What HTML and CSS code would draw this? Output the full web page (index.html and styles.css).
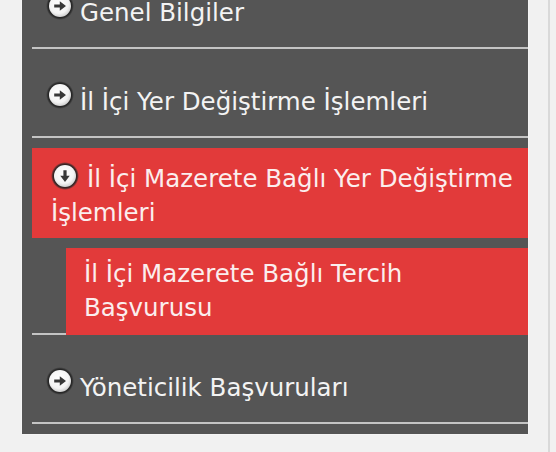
FILE: index.html
```html
<!DOCTYPE html>
<html lang="tr">
<head>
<meta charset="utf-8">
<title>Menü</title>
<link rel="stylesheet" href="styles.css">
</head>
<body>
<svg class="defs" width="0" height="0" aria-hidden="true">
  <defs>
    <radialGradient id="ring" cx="50%" cy="50%" r="50%">
      <stop offset="0.74" stop-color="#151515" stop-opacity="1"/>
      <stop offset="0.88" stop-color="#262626" stop-opacity="0.8"/>
      <stop offset="1" stop-color="#333" stop-opacity="0"/>
    </radialGradient>
    <radialGradient id="face" cx="45%" cy="40%" r="62%">
      <stop offset="0" stop-color="#ffffff"/>
      <stop offset="0.7" stop-color="#f4f4f4"/>
      <stop offset="1" stop-color="#cccccc"/>
    </radialGradient>
    <symbol id="arrow-right" viewBox="0 0 28 28">
      <circle cx="14" cy="14" r="14" fill="url(#ring)"/>
      <circle cx="14" cy="14" r="11" fill="url(#face)"/>
      <path d="M8.2 12.4h5.6V9.3l6.2 4.7-6.2 4.7v-3.1H8.2z" fill="#383838"/>
    </symbol>
    <symbol id="arrow-down" viewBox="0 0 28 28">
      <circle cx="14" cy="14" r="14" fill="url(#ring)"/>
      <circle cx="14" cy="14" r="11" fill="url(#face)"/>
      <path d="M12.4 8.2v5.6H9.3l4.7 6.2 4.7-6.2h-3.1V8.2z" fill="#383838"/>
    </symbol>
  </defs>
</svg>
<div class="page">
  <nav class="panel">
    <ul class="menu">
      <li class="item">
        <a class="link" href="#"><svg class="icon"><use href="#arrow-right"/></svg>Genel Bilgiler</a>
      </li>
      <li class="item">
        <a class="link" href="#"><svg class="icon"><use href="#arrow-right"/></svg>İl İçi Yer Değiştirme İşlemleri</a>
      </li>
      <li class="item item-open">
        <a class="link link-active" href="#"><svg class="icon icon-open"><use href="#arrow-down"/></svg>İl İçi Mazerete Bağlı Yer Değiştirme İşlemleri</a>
        <ul class="submenu">
          <li><a class="sublink" href="#">İl İçi Mazerete Bağlı Tercih Başvurusu</a></li>
        </ul>
      </li>
      <li class="item">
        <a class="link" href="#"><svg class="icon"><use href="#arrow-right"/></svg>Yöneticilik Başvuruları</a>
      </li>
    </ul>
  </nav>
  <div class="rail"></div>
</div>
</body>
</html>
```
FILE: styles.css
```css
html, body {
  margin: 0;
  padding: 0;
}

body {
  background: #f1f1f1;
  font-family: "DejaVu Sans", Verdana, sans-serif;
  font-size: 24.5px;
  line-height: 34px;
  color: #f3f3f3;
}

.defs {
  position: absolute;
  width: 0;
  height: 0;
}

.page {
  display: flex;
  align-items: flex-start;
  width: 556px;
  height: 452px;
  overflow: hidden;
}

.panel {
  margin-left: 22px;
  margin-top: -40px;
  width: 496px;
  background: #555555;
  padding: 0 0 10px 10px;
  box-shadow: 0 0 2px rgba(255, 255, 255, 0.9);
}

.menu,
.submenu {
  list-style: none;
  margin: 0;
  padding: 0;
}

.item {
  border-bottom: 2px solid #c4c4c4;
}

.item-open {
  margin-top: 10px;
}

.link {
  display: block;
  padding: 36px 0 17px 14px;
  color: #f3f3f3;
  text-decoration: none;
}

.link-active {
  background: #e23a3a;
  padding: 14px 10px 8px 19px;
  color: #fbeeee;
}

.icon {
  width: 28px;
  height: 28px;
  margin: -10px 6px 0 0;
  vertical-align: 1px;
}

.icon-open {
  margin-right: 8px;
  vertical-align: -3px;
}

.submenu {
  margin: 10px 0 -2px 34px;
}

.sublink {
  display: block;
  background: #e23a3a;
  padding: 9px 10px 10px 18px;
  color: #fbeeee;
  text-decoration: none;
}

.rail {
  width: 2px;
  height: 452px;
  margin-left: 20px;
  background: #d9d9d9;
}
```
